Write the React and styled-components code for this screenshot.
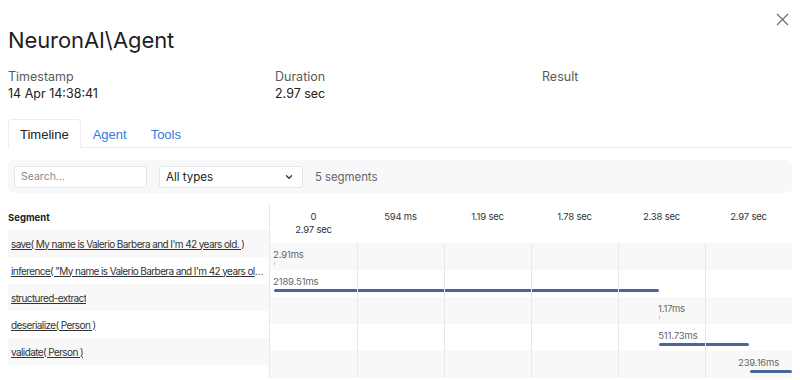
import React from "react";
import styled, { createGlobalStyle } from "styled-components";

const GlobalStyle = createGlobalStyle`
  * { box-sizing: border-box; }
  html, body { margin: 0; padding: 0; background: #ffffff; }
  body { font-family: Inter, "Noto Sans", sans-serif; color: #222; overflow: hidden; }
`;

const Page = styled.div`
  width: 800px;
  height: 380px;
  padding: 0 8px;
  overflow: hidden;
`;

const CloseRow = styled.div`
  height: 26px;
  display: flex;
  justify-content: flex-end;
  align-items: flex-end;
  padding-right: 3px;
`;

const CloseButton = styled.button`
  border: 0;
  background: none;
  padding: 0;
  width: 13px;
  height: 13px;
  display: flex;
  color: #6f6f6f;
  cursor: pointer;
`;

const Title = styled.h1`
  margin: 0;
  font-size: 22px;
  line-height: 28px;
  font-weight: 400;
  color: #1f1f1f;
  letter-spacing: -0.1px;
`;

const Meta = styled.div`
  margin-top: 14px;
  display: grid;
  grid-template-columns: 267px 267px 1fr;
`;

const MetaLabel = styled.div`
  font-size: 12.5px;
  line-height: 17px;
  color: #5a5a5a;
`;

const MetaValue = styled.div`
  font-size: 12.5px;
  line-height: 17px;
  color: #222;
`;

const Tabs = styled.div`
  margin-top: 17px;
  display: flex;
  border-bottom: 1px solid #ececec;
  height: 29px;
`;

const Tab = styled.div`
  height: 29px;
  padding: 1px 11px 0;
  display: flex;
  align-items: center;
  font-family: "Liberation Sans", Arial, sans-serif;
  font-size: 13px;
  color: ${(p) => (p.$active ? "#222" : "#2f7be0")};
  background: ${(p) => (p.$active ? "#fff" : "transparent")};
  border: 1px solid ${(p) => (p.$active ? "#ececec" : "transparent")};
  border-bottom-color: ${(p) => (p.$active ? "#fff" : "transparent")};
  border-radius: 4px 4px 0 0;
  margin-bottom: -1px;
`;

const FilterBar = styled.div`
  margin-top: 12px;
  height: 33px;
  background: #f7f8fa;
  border-radius: 6px;
  display: flex;
  align-items: center;
  padding: 0 6px;
  gap: 12px;
`;

const SearchInput = styled.input`
  width: 133px;
  height: 22px;
  border: 1px solid #e6e6e6;
  border-radius: 3px;
  background: #fff;
  padding: 0 6px;
  font-family: inherit;
  font-size: 10.5px;
  color: #333;
  outline: none;
  &::placeholder { color: #8a8a8a; }
`;

const Select = styled.div`
  width: 144px;
  height: 22px;
  border: 1px solid #e6e6e6;
  border-radius: 3px;
  background: #fff;
  padding: 0 8px 0 6px;
  display: flex;
  align-items: center;
  justify-content: space-between;
  font-size: 11.5px;
  color: #222;
`;

const Count = styled.div`
  font-size: 11.5px;
  color: #666;
  letter-spacing: -0.1px;
`;

const Table = styled.div`
  margin-top: 11px;
  display: grid;
  grid-template-columns: 261px 1fr;
`;

const SegmentCol = styled.div`
  display: flex;
  flex-direction: column;
`;

const SegmentHead = styled.div`
  height: 26px;
  display: flex;
  align-items: center;
  font-size: 9.5px;
  font-weight: 700;
  color: #222;
`;

const SegmentRow = styled.div`
  height: 27px;
  display: flex;
  align-items: center;
  padding-left: 3px;
  background: ${(p) => (p.$shaded ? "#f8f8f8" : "#fff")};
`;

const SegmentLink = styled.a`
  font-size: 10px;
  letter-spacing: -0.6px;
  color: #333;
  text-decoration: underline;
  white-space: nowrap;
  overflow: hidden;
  text-overflow: ellipsis;
  max-width: 256px;
`;

const TimelineCol = styled.div`
  border-left: 1px solid #e8e8e8;
  display: flex;
  flex-direction: column;
`;

const TickHead = styled.div`
  height: 39px;
  display: grid;
  grid-template-columns: repeat(6, 1fr);
  padding-top: 6px;
`;

const Tick = styled.div`
  text-align: center;
  font-size: 9.5px;
  line-height: 13px;
  letter-spacing: -0.2px;
  color: #333;
`;

const TimelineBody = styled.div`
  position: relative;
`;

const GridLines = styled.div`
  position: absolute;
  inset: 0;
  display: grid;
  grid-template-columns: repeat(6, 1fr);
  pointer-events: none;
`;

const GridCell = styled.div`
  border-left: 1px solid ${(p) => (p.$first ? "transparent" : "#e8e8e8")};
`;

const TrackRow = styled.div`
  position: relative;
  height: 27px;
  overflow: hidden;
  background: ${(p) => (p.$shaded ? "#f8f8f8" : "#fff")};
`;

const BarLabel = styled.span`
  position: absolute;
  top: 5px;
  font-size: 9.5px;
  line-height: 13px;
  letter-spacing: -0.15px;
  color: #666;
  white-space: nowrap;
`;

const Bar = styled.div`
  position: absolute;
  top: 19px;
  height: 3px;
  border-radius: 1.5px;
  background: ${(p) => (p.$tiny ? "#b7c0d2" : "#4c669b")};
`;

const TOTAL = 2970;
const SCALE = 522;
const OFFSET = 4;

const segments = [
  { name: "save( My name is Valerio Barbera and I'm 42 years old. )", start: 0, dur: 2.91 },
  { name: 'inference( "My name is Valerio Barbera and I\'m 42 years old." )', start: 0.2, dur: 2189.51 },
  { name: "structured-extract", start: 2190.2, dur: 1.17 },
  { name: "deserialize( Person )", start: 2191.8, dur: 511.73 },
  { name: "validate( Person )", start: 2707.5, dur: 239.16 },
];

const ticks = ["0", "594 ms", "1.19 sec", "1.78 sec", "2.38 sec", "2.97 sec"];

function XIcon() {
  return (
    <svg width="13" height="13" viewBox="0 0 13 13" fill="none" stroke="currentColor" strokeWidth="1.2">
      <path d="M1 1 L12 12 M12 1 L1 12" />
    </svg>
  );
}

function Chevron() {
  return (
    <svg width="10" height="10" viewBox="0 0 10 10" fill="none" stroke="#333" strokeWidth="1.3" strokeLinecap="round" strokeLinejoin="round">
      <path d="M2.5 3.8 L5 6.3 L7.5 3.8" />
    </svg>
  );
}

export default function App() {
  return (
    <Page>
      <GlobalStyle />
      <CloseRow>
        <CloseButton aria-label="Close"><XIcon /></CloseButton>
      </CloseRow>
      <Title>NeuronAI\Agent</Title>
      <Meta>
        <div>
          <MetaLabel>Timestamp</MetaLabel>
          <MetaValue>14 Apr 14:38:41</MetaValue>
        </div>
        <div>
          <MetaLabel>Duration</MetaLabel>
          <MetaValue>2.97 sec</MetaValue>
        </div>
        <div>
          <MetaLabel>Result</MetaLabel>
        </div>
      </Meta>
      <Tabs>
        <Tab $active>Timeline</Tab>
        <Tab>Agent</Tab>
        <Tab>Tools</Tab>
      </Tabs>
      <FilterBar>
        <SearchInput placeholder="Search..." />
        <Select>
          <span>All types</span>
          <Chevron />
        </Select>
        <Count>5 segments</Count>
      </FilterBar>
      <Table>
        <SegmentCol>
          <SegmentHead>Segment</SegmentHead>
          {segments.map((s, i) => (
            <SegmentRow key={i} $shaded={i % 2 === 0}>
              <SegmentLink href="#">{s.name}</SegmentLink>
            </SegmentRow>
          ))}
        </SegmentCol>
        <TimelineCol>
          <TickHead>
            {ticks.map((t, i) => (
              <Tick key={i}>
                {t}
                {i === 0 && <><br />2.97 sec</>}
              </Tick>
            ))}
          </TickHead>
          <TimelineBody>
            {segments.map((s, i) => {
              const left = OFFSET + (s.start / TOTAL) * SCALE;
              const width = Math.max(1, (s.dur / TOTAL) * SCALE);
              const labelLeft = Math.min(left - 1, SCALE - 54);
              return (
                <TrackRow key={i} $shaded={i % 2 === 0}>
                  <BarLabel style={{ left: labelLeft }}>
                    {s.dur.toFixed(2)}ms
                  </BarLabel>
                  <Bar $tiny={width < 2} style={{ left, width }} />
                </TrackRow>
              );
            })}
            <GridLines>
              {ticks.map((t, i) => (
                <GridCell key={i} $first={i === 0} />
              ))}
            </GridLines>
          </TimelineBody>
        </TimelineCol>
      </Table>
    </Page>
  );
}
